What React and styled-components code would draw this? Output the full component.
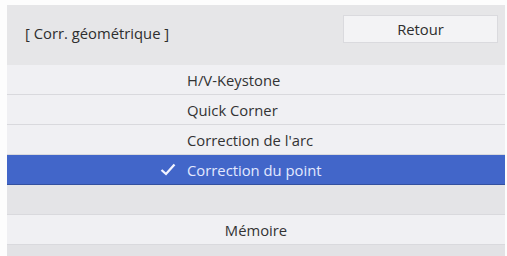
import React from 'react';
import styled, { createGlobalStyle } from 'styled-components';

const GlobalStyle = createGlobalStyle`
  html, body {
    margin:0;
    padding:0;
    background:#fdfdfd;
  }
  body {
    font-family:"Open Sans", "Liberation Sans", sans-serif;
  }
`;

const items = [
  { label: 'H/V-Keystone' },
  { label: 'Quick Corner' },
  { label: "Correction de l'arc" },
  { label: 'Correction du point', selected: true },
];

const App = () => (
  <>
    <GlobalStyle />
    <Panel>
      <Header>
        <Title>[ Corr. géométrique ]</Title>
        <BackButton>Retour</BackButton>
      </Header>
      {items.map(item => (
        <Row key={item.label} selected={item.selected}>
          <Check>
            {item.selected && (
              <svg width="16" height="13" viewBox="0 0 16 13">
                <path d="M1.5 7 L6 11 L14.5 1.5" fill="none" stroke="#f2f4ff" strokeWidth="2.3" />
              </svg>
            )}
          </Check>
          {item.label}
        </Row>
      ))}
      <Row blank />
      <Row centered>Mémoire</Row>
      <Footer />
    </Panel>
  </>
);

const Panel = styled.div`
  display:flex;
  flex-direction:column;
  margin:5px 2px 0 7px;
  width:498px;
`;

const Header = styled.div`
  display:flex;
  align-items:flex-start;
  justify-content:space-between;
  height:60px;
  padding:10px 7px 0 18px;
  box-sizing:border-box;
  background:#e6e6e8;
`;

const Title = styled.div`
  font-size:14.8px;
  color:#2e2e2e;
  line-height:28px;
  margin-top:4px;
`;

const BackButton = styled.div`
  width:155px;
  height:28px;
  box-sizing:border-box;
  display:flex;
  align-items:center;
  justify-content:center;
  font-size:14.8px;
  color:#2e2e2e;
  background:#f3f3f5;
  border:1px solid #dadade;
`;

const Row = styled.div`
  display:flex;
  align-items:center;
  justify-content:${p => (p.centered ? 'center' : 'flex-start')};
  height:30px;
  box-sizing:border-box;
  padding-left:${p => (p.centered ? '0' : '153px')};
  border-bottom:1px solid ${p => (p.selected ? '#33509f' : '#d9d9dd')};
  background:${p => (p.selected ? '#4266c9' : p.blank ? '#e4e4e7' : '#f0f0f3')};
  color:${p => (p.selected ? '#e3e9ff' : '#333')};
  font-size:14.8px;
`;

const Check = styled.span`
  display:inline-flex;
  align-items:center;
  width:27px;
`;

const Footer = styled.div`
  height:15px;
  background:#e2e2e5;
`;

export default App;
